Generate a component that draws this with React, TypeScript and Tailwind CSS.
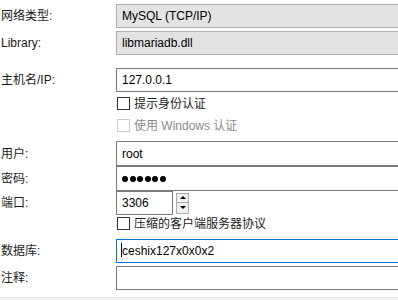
import React from "react";

const font = { fontFamily: '"Liberation Sans", "Noto Sans CJK SC", sans-serif' };

function Label({ children }: { children: React.ReactNode }) {
  return <div className="w-[116px] shrink-0 pl-[1px] text-[12px] text-[#1a1a1a]">{children}</div>;
}

function Box({
  children,
  h = "h-[24px]",
  cls = "border-[#7a7a7a] bg-white",
}: {
  children?: React.ReactNode;
  h?: string;
  cls?: string;
}) {
  return (
    <div className={`w-[300px] ${h} border ${cls} flex items-center pl-[5px] text-[12px] text-black shrink-0`}>
      {children}
    </div>
  );
}

function Check({ label, disabled }: { label: string; disabled?: boolean }) {
  return (
    <div className="flex items-center h-[13px] pl-[117px]">
      <div
        className={`w-[13px] h-[13px] border bg-white shrink-0 ${
          disabled ? "border-[#cccccc]" : "border-[#333333]"
        }`}
      />
      <span className={`ml-[4px] text-[12px] leading-none ${disabled ? "text-[#8a8a8a]" : "text-[#1a1a1a]"}`}>
        {label}
      </span>
    </div>
  );
}

export default function App() {
  return (
    <div className="w-[398px] h-[300px] overflow-hidden bg-white relative flex flex-col" style={font}>
      <div className="flex items-center mt-[4px]">
        <Label>网络类型:</Label>
        <Box cls="border-[#adadad] bg-[#e3e3e3]">MySQL (TCP/IP)</Box>
      </div>
      <div className="flex items-center mt-[3px]">
        <Label>Library:</Label>
        <Box cls="border-[#adadad] bg-[#e3e3e3]">libmariadb.dll</Box>
      </div>
      <div className="flex items-center mt-[13px]">
        <Label>主机名/IP:</Label>
        <Box>127.0.0.1</Box>
      </div>
      <div className="mt-[5px]">
        <Check label="提示身份认证" />
      </div>
      <div className="mt-[9px]">
        <Check label="使用 Windows 认证" disabled />
      </div>
      <div className="flex items-center mt-[9px]">
        <Label>用户:</Label>
        <Box h="h-[25px]">root</Box>
      </div>
      <div className="flex items-center">
        <Label>密码:</Label>
        <Box h="h-[25px]">
          <div className="flex gap-[1.5px]">
            {[0, 1, 2, 3, 4, 5].map((i) => (
              <div key={i} className="w-[6px] h-[6px] rounded-full bg-black" />
            ))}
          </div>
        </Box>
      </div>
      <div className="flex items-center">
        <Label>端口:</Label>
        <div className="w-[57px] h-[24px] border border-[#7a7a7a] bg-white flex items-center pl-[5px] text-[12px] text-black">
          3306
        </div>
        <div className="ml-[3px] flex flex-col w-[13px]">
          <div className="h-[10px] border border-[#acacac] bg-[#f0f0f0] flex items-center justify-center">
            <div className="w-0 h-0 border-l-[3px] border-r-[3px] border-b-[3px] border-l-transparent border-r-transparent border-b-black" />
          </div>
          <div className="h-[11px] border border-t-0 border-[#acacac] bg-[#f0f0f0] flex items-center justify-center">
            <div className="w-0 h-0 border-l-[3px] border-r-[3px] border-t-[3px] border-l-transparent border-r-transparent border-t-black" />
          </div>
        </div>
      </div>
      <div className="mt-[2px]">
        <Check label="压缩的客户端服务器协议" />
      </div>
      <div className="flex items-center mt-[9px]">
        <Label>数据库:</Label>
        <Box cls="border-[#0078d7] bg-white">
          <div className="relative">
            <span className="absolute left-[-1px] top-[1px] w-[1px] h-[14px] bg-black" />
            ceshix127x0x0x2
          </div>
        </Box>
      </div>
      <div className="flex items-center mt-[3px]">
        <Label>注释:</Label>
        <Box />
      </div>
      <div className="mt-auto h-[3px] bg-[#f0f0f0] border-t border-[#e3e3e3]" />
    </div>
  );
}
